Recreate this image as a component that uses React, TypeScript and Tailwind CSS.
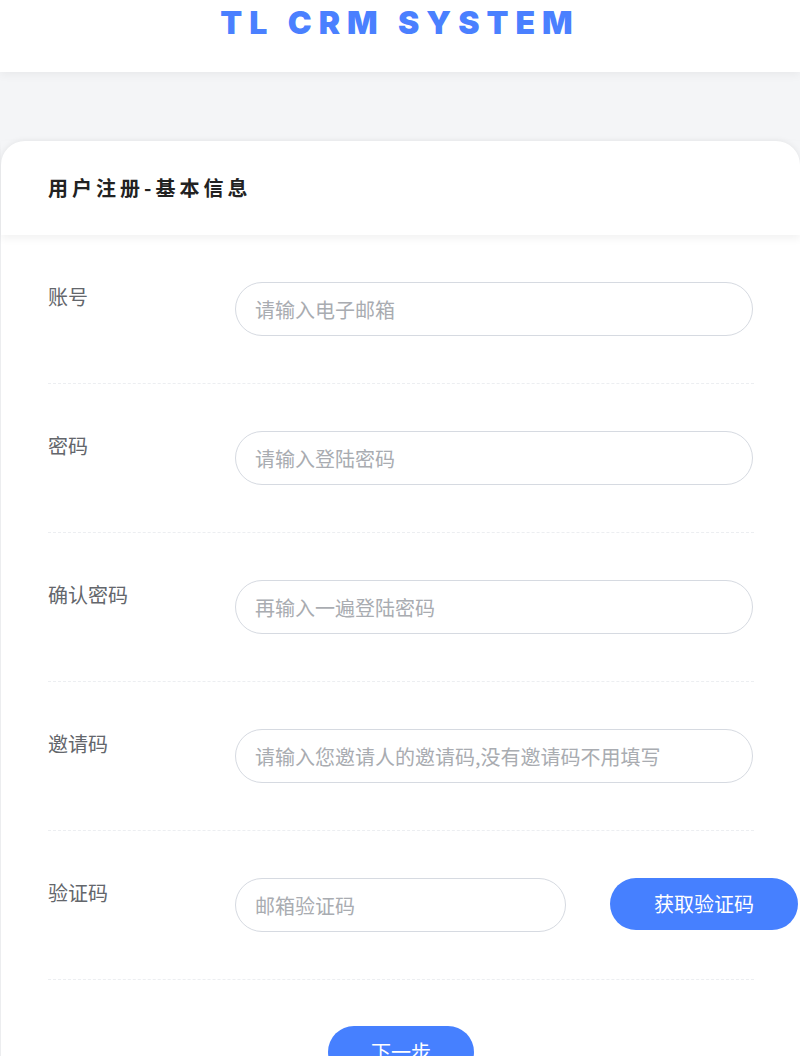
const fields = [
  { label: "账号", placeholder: "请输入电子邮箱" },
  { label: "密码", placeholder: "请输入登陆密码" },
  { label: "确认密码", placeholder: "再输入一遍登陆密码" },
  { label: "邀请码", placeholder: "请输入您邀请人的邀请码,没有邀请码不用填写" },
];

const cjk = { fontFamily: '"Noto Sans CJK SC", "Noto Sans", sans-serif' };

export default function App() {
  return (
    <div className="h-[1056px] bg-[#f4f5f7] overflow-hidden" style={cjk}>
      {/* Top bar */}
      <header className="h-[72px] bg-white shadow-[0_2px_10px_rgba(0,0,0,0.06)] flex justify-center">
        <h1
          className="mt-[3px] text-[32px] leading-[40px] font-black tracking-[7px] text-[#4a80ff]"
          style={{ fontFamily: "Inter, sans-serif" }}
        >
          TL CRM SYSTEM
        </h1>
      </header>

      {/* Card */}
      <div className="mt-[69px] ml-[1px] w-[799px] bg-white rounded-t-[24px] shadow-[0_0_6px_rgba(0,0,0,0.08)]">
        <div className="h-[94px] flex items-center pl-[47px] shadow-[0_4px_8px_rgba(0,0,0,0.05)] relative">
          <h2 className="text-[20px] font-bold tracking-[4px] text-[#222]">用户注册-基本信息</h2>
        </div>

        <div className="pl-[47px] pr-[46px]">
          {fields.map((f) => (
            <div
              key={f.label}
              className="flex pt-[47px] pb-[47px] border-b border-dashed border-[#eceef1]"
            >
              <div className="w-[187px] shrink-0 pt-[2px] text-[20px] leading-[26px] text-[#63666b]">
                {f.label}
              </div>
              <input
                placeholder={f.placeholder}
                className="w-[518px] shrink-0 h-[54px] rounded-full border border-[#d6dae1] px-[19px] text-[20px] placeholder:text-[#a9acb1] outline-none"
                style={cjk}
              />
            </div>
          ))}

          <div className="flex items-start pt-[47px] pb-[47px] border-b border-dashed border-[#eceef1]">
            <div className="w-[187px] shrink-0 pt-[2px] text-[20px] leading-[26px] text-[#63666b]">验证码</div>
            <input
              placeholder="邮箱验证码"
              className="w-[331px] shrink-0 h-[54px] rounded-full border border-[#d6dae1] px-[19px] text-[20px] placeholder:text-[#a9acb1] outline-none"
              style={cjk}
            />
            <button className="ml-[44px] shrink-0 w-[188px] h-[52px] rounded-full bg-[#4680ff] text-white text-[20px]">
              获取验证码
            </button>
          </div>

          <div className="flex justify-center pt-[46px] pb-[40px]">
            <button className="w-[146px] h-[52px] rounded-full bg-[#4680ff] text-white text-[20px]">
              下一步
            </button>
          </div>
        </div>
      </div>
    </div>
  );
}
